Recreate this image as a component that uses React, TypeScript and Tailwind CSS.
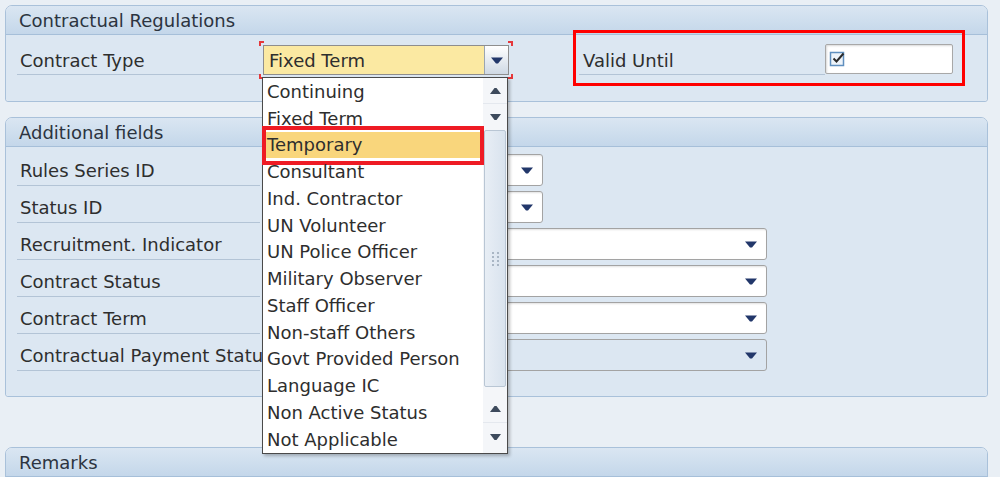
import React from 'react';

const contractTypes = [
  'Continuing',
  'Fixed Term',
  'Temporary',
  'Consultant',
  'Ind. Contractor',
  'UN Volunteer',
  'UN Police Officer',
  'Military Observer',
  'Staff Officer',
  'Non-staff Others',
  'Govt Provided Person',
  'Language IC',
  'Non Active Status',
  'Not Applicable',
];

const additionalFields = [
  { label: 'Rules Series ID', width: 'w-[280px]', disabled: false },
  { label: 'Status ID', width: 'w-[280px]', disabled: false },
  { label: 'Recruitment. Indicator', width: 'w-[504px]', disabled: false },
  { label: 'Contract Status', width: 'w-[504px]', disabled: false },
  { label: 'Contract Term', width: 'w-[504px]', disabled: false },
  { label: 'Contractual Payment Status', width: 'w-[504px]', disabled: true },
];

function Arrow({ up = false }: { up?: boolean }) {
  return (
    <svg width="12" height="7" viewBox="0 0 12 7" className={up ? 'rotate-180' : ''}>
      <path d="M0 0.5h12L7 6.5H5z" fill="#22376a" />
    </svg>
  );
}

function SmallArrow({ up = false }: { up?: boolean }) {
  return (
    <svg width="11" height="6" viewBox="0 0 11 6" className={up ? 'rotate-180' : ''}>
      <path d="M0 0h11L6.5 6h-2z" fill="#3d4a5c" />
    </svg>
  );
}

function PanelHeader({ title }: { title: string }) {
  return (
    <div className="h-[29px] rounded-t-[6px] bg-linear-to-b from-[#dae6f2] to-[#c4d7ea] border-b border-[#a6bfd9] flex items-center pl-[13px] text-[18px] text-[#2c3440]">
      {title}
    </div>
  );
}

function FieldLabel({ children }: { children: React.ReactNode }) {
  return (
    <div className="ml-[11px] w-[243px] h-full shrink-0 border-b border-[#b3c4d6] flex items-center pl-[3px] pt-[2px] whitespace-nowrap text-[18px] text-[#2e2e2e]">
      {children}
    </div>
  );
}

function DropdownList() {
  return (
    <div className="absolute left-[-2px] top-[31px] z-10 w-[246px] h-[377px] bg-white border border-[#4a4a4a] shadow-[2px_2px_3px_rgba(0,0,0,0.25)] flex">
      <div className="flex-1 flex flex-col">
        {contractTypes.map((item) => (
          <div
            key={item}
            className={`relative h-[26.75px] shrink-0 flex items-center pl-[4px] text-[18px] text-[#2e2e2e] whitespace-nowrap ${
              item === 'Temporary' ? 'bg-[#f9d67c]' : ''
            }`}
          >
            {item}
            {item === 'Temporary' && (
              <div className="absolute -top-[6px] -bottom-[7px] -left-[1px] -right-[1px] border-[4px] border-[#ee1b24]" />
            )}
          </div>
        ))}
      </div>
      {/* Scrollbar */}
      <div className="w-[24px] bg-[#f4f6f9] flex flex-col items-center">
        <div className="h-[26px] w-full flex items-center justify-center border-b border-[#e4e8ee]">
          <SmallArrow up />
        </div>
        <div className="h-[26px] w-full flex items-center justify-center">
          <SmallArrow />
        </div>
        <div className="w-[22px] h-[257px] rounded-[2px] border border-[#b9c6d4] bg-linear-to-r from-[#e8eef5] to-[#d9e3ee] flex items-center justify-center">
          <div className="grid grid-cols-2 gap-x-[3px] gap-y-[2px]">
            {Array.from({ length: 8 }).map((_, i) => (
              <div key={i} className="w-[2px] h-[2px] bg-[#a9b6c4]" />
            ))}
          </div>
        </div>
        <div className="h-[9px]" />
        <div className="h-[27px] w-full flex items-center justify-center border-b border-[#e4e8ee]">
          <SmallArrow up />
        </div>
        <div className="h-[27px] w-full flex items-center justify-center">
          <SmallArrow />
        </div>
      </div>
    </div>
  );
}

function ContractTypeSelect() {
  return (
    <div className="relative ml-[3px] mt-[1px] w-[246px] h-[30px] border border-[#8e8e8e] flex">
      <div className="flex-1 bg-[#fbe9a2] flex items-center pl-[5px] text-[18px] text-[#2e2e2e]">Fixed Term</div>
      <div className="w-[24px] border-l border-[#9aa5b1] bg-linear-to-b from-white to-[#cfd9e4] flex items-center justify-center">
        <Arrow />
      </div>
      {/* focus corners */}
      <div className="absolute -left-[5px] -top-[5px] w-[5px] h-[5px] border-l-2 border-t-2 border-[#e5383b]" />
      <div className="absolute -right-[5px] -top-[5px] w-[5px] h-[5px] border-r-2 border-t-2 border-[#e5383b]" />
      <div className="absolute -left-[5px] -bottom-[5px] w-[5px] h-[5px] border-l-2 border-b-2 border-[#e5383b]" />
      <div className="absolute -right-[5px] -bottom-[5px] w-[5px] h-[5px] border-r-2 border-b-2 border-[#e5383b]" />
      <DropdownList />
    </div>
  );
}

function CheckIcon() {
  return (
    <svg width="20" height="18" viewBox="0 0 20 18">
      <rect x="1.5" y="2.5" width="13" height="13" fill="#eef4fa" stroke="#5f8fbf" strokeWidth="1.5" />
      <path d="M4.5 8.5l3 3 7-8" fill="none" stroke="#2b2b2b" strokeWidth="2" />
    </svg>
  );
}

export default function App() {
  return (
    <div className="relative w-[1000px] h-[477px] overflow-hidden bg-[#e9eff5] pt-[5px] font-['DejaVu_Sans','Noto_Sans',sans-serif]">
      {/* Contractual Regulations */}
      <div className="ml-[5px] w-[983px] border border-[#a9c1da] rounded-t-[7px] rounded-b-[3px] overflow-visible">
        <PanelHeader title="Contractual Regulations" />
        <div className="h-[66px] bg-[#dce7f2] pt-[9px] rounded-b-[3px]">
          <div className="h-[31px] flex items-start">
            <FieldLabel>Contract Type</FieldLabel>
            <ContractTypeSelect />

            {/* Valid Until */}
            <div className="relative ml-[70px] h-[31px] flex">
              <div className="w-[246px] h-full border-b border-[#b3c4d6] flex items-center pl-[4px] pt-[2px] text-[18px] text-[#2e2e2e]">
                Valid Until
              </div>
              <div className="w-[128px] h-[30px] bg-white border border-[#a8a8a8] rounded-[2px] shadow-[inset_1px_1px_2px_rgba(0,0,0,0.15)] flex items-center pl-[3px]">
                <CheckIcon />
              </div>
              <div className="absolute -left-[6px] -top-[14px] -bottom-[11px] -right-[12px] border-[3px] border-[#ff0000]" />
            </div>
          </div>
        </div>
      </div>

      {/* Additional fields */}
      <div className="mt-[15px] ml-[5px] w-[983px] border border-[#a9c1da] rounded-t-[7px] rounded-b-[3px]">
        <PanelHeader title="Additional fields" />
        <div className="bg-[#dce7f2] pt-[7px] pb-[25px] flex flex-col gap-[5px] rounded-b-[3px]">
          {additionalFields.map((f) => (
            <div key={f.label} className="h-[32px] flex items-stretch">
              <FieldLabel>{f.label}</FieldLabel>
              <div
                className={`ml-[3px] ${f.width} h-[32px] rounded-[3px] border border-[#a3a3a3] flex items-center justify-end pr-[9px] ${
                  f.disabled ? 'bg-[#dce7f2]' : 'bg-white shadow-[inset_1px_1px_2px_rgba(0,0,0,0.12)]'
                }`}
              >
                <Arrow />
              </div>
            </div>
          ))}
        </div>
      </div>

      {/* Remarks */}
      <div className="mt-[50px] ml-[5px] w-[983px] border border-[#a9c1da] rounded-t-[7px]">
        <PanelHeader title="Remarks" />
      </div>
    </div>
  );
}
